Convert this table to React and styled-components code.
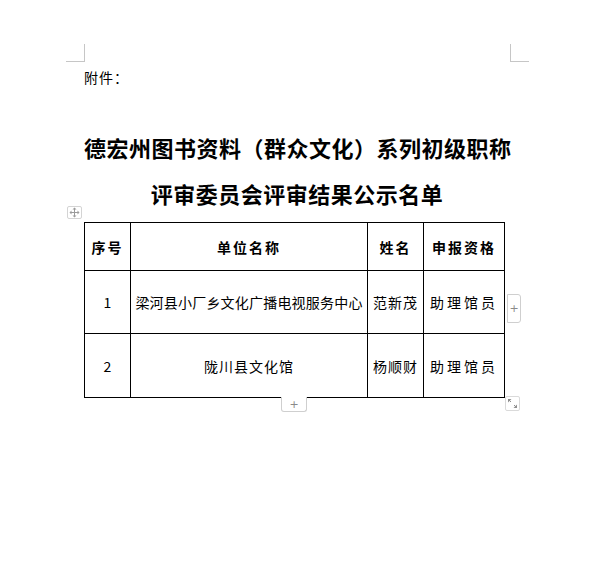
import React from 'react';
import styled, { createGlobalStyle } from 'styled-components';

const Global = createGlobalStyle`
  html, body { margin: 0; padding: 0; background: #fff; }
  body { font-family: "Noto Sans CJK SC", sans-serif; color: #000; }
`;

const Page = styled.div`
  width: 599px;
  height: 578px;
  box-sizing: border-box;
  padding-top: 44px;
  background: #fff;
`;

const Marks = styled.div`
  display: flex;
  justify-content: space-between;
  margin: 0 70px 0 66px;
`;

const Mark = styled.div`
  width: 19px;
  height: 18px;
  box-sizing: border-box;
  border-bottom: 1px solid #c6c6c6;
  ${(p) => (p.$side === 'left' ? 'border-right: 1px solid #c6c6c6;' : 'border-left: 1px solid #c6c6c6;')}
`;

const Content = styled.div`
  margin-left: 84px;
  width: 426px;
`;

const Attachment = styled.div`
  margin-top: 5px;
  font-size: 14px;
  line-height: 20px;
  letter-spacing: 1px;
`;

const Title = styled.h1`
  margin: 37px 0 0;
  font-size: 22px;
  font-weight: 700;
  line-height: 46px;
  text-align: center;
  white-space: nowrap;
  letter-spacing: 0.5px;
`;

const TableWrap = styled.div`
  position: relative;
  margin-top: 6px;
  width: 420px;
`;

const Table = styled.table`
  border-collapse: collapse;
  table-layout: fixed;
  width: 420px;
`;

const Th = styled.td`
  border: 1px solid #000;
  height: 47px;
  padding: 0;
  text-align: center;
  vertical-align: middle;
  font-size: 14px;
  font-weight: 700;
  letter-spacing: 2px;
`;

const Td = styled.td`
  border: 1px solid #000;
  height: ${(p) => p.$h}px;
  padding: 0 ${(p) => (p.$tight ? 0 : 2)}px;
  text-align: center;
  vertical-align: middle;
  font-size: 14px;
  letter-spacing: ${(p) => p.$ls || 0}px;
  white-space: nowrap;
  overflow: visible;
`;

const MoveHandle = styled.div`
  position: absolute;
  left: -17px;
  top: -16px;
  width: 15px;
  height: 13px;
  box-sizing: border-box;
  border: 1px solid #d4d4d4;
  border-radius: 2px;
  display: flex;
  align-items: center;
  justify-content: center;
  background: #fff;
`;

const SideAdd = styled.div`
  position: absolute;
  left: 423px;
  top: 72px;
  width: 14px;
  height: 29px;
  box-sizing: border-box;
  border: 1px solid #cfcfcf;
  border-radius: 0 3px 3px 0;
  display: flex;
  align-items: center;
  justify-content: center;
  color: #8a8a8a;
  font-family: "DejaVu Sans", sans-serif;
  font-size: 11px;
  background: #fff;
`;

const BottomAdd = styled.div`
  position: absolute;
  left: 197px;
  top: 175px;
  width: 26px;
  height: 15px;
  box-sizing: border-box;
  border: 1px solid #cfcfcf;
  border-top: none;
  border-radius: 0 0 3px 3px;
  display: flex;
  align-items: center;
  justify-content: center;
  color: #8a8a8a;
  font-family: "DejaVu Sans", sans-serif;
  font-size: 11px;
  background: #fff;
`;

const Resize = styled.div`
  position: absolute;
  left: 421px;
  top: 174px;
  width: 15px;
  height: 15px;
  box-sizing: border-box;
  border: 1px solid #dadada;
  border-radius: 2px;
  display: flex;
  align-items: center;
  justify-content: center;
  background: #fff;
`;

const MoveIcon = () => (
  <svg width="11" height="11" viewBox="0 0 11 11">
    <g fill="#9a9a9a">
      <path d="M5.5 0.5 L7.5 2.5 L3.5 2.5 Z" />
      <path d="M5.5 10.5 L7.5 8.5 L3.5 8.5 Z" />
      <path d="M0.5 5.5 L2.5 3.5 L2.5 7.5 Z" />
      <path d="M10.5 5.5 L8.5 3.5 L8.5 7.5 Z" />
      <rect x="5" y="2" width="1" height="7" />
      <rect x="2" y="5" width="7" height="1" />
    </g>
  </svg>
);

const ResizeIcon = () => (
  <svg width="11" height="11" viewBox="0 0 11 11">
    <g fill="#8f8f8f">
      <path d="M1 1 L4.5 1 L1 4.5 Z" />
      <path d="M10 10 L6.5 10 L10 6.5 Z" />
      <path d="M2 2 L4 4" stroke="#8f8f8f" strokeWidth="1" />
      <path d="M7 7 L9 9" stroke="#8f8f8f" strokeWidth="1" />
    </g>
  </svg>
);

const rows = [
  { no: '1', unit: '梁河县小厂乡文化广播电视服务中心', name: '范新茂', level: '助理馆员', h: 62, unitLs: 0.2 },
  { no: '2', unit: '陇川县文化馆', name: '杨顺财', level: '助理馆员', h: 63, unitLs: 1 },
];

export default function App() {
  return (
    <Page>
      <Global />
      <Marks>
        <Mark $side="left" />
        <Mark $side="right" />
      </Marks>
      <Content>
        <Attachment>附件：</Attachment>
        <Title>
          德宏州图书资料（群众文化）系列初级职称
          <br />
          评审委员会评审结果公示名单
        </Title>
        <TableWrap>
          <MoveHandle>
            <MoveIcon />
          </MoveHandle>
          <Table>
            <colgroup>
              <col style={{ width: 46 }} />
              <col style={{ width: 237 }} />
              <col style={{ width: 56 }} />
              <col style={{ width: 81 }} />
            </colgroup>
            <tbody>
              <tr>
                <Th>序号</Th>
                <Th>单位名称</Th>
                <Th>姓名</Th>
                <Th>申报资格</Th>
              </tr>
              {rows.map((r) => (
                <tr key={r.no}>
                  <Td $h={r.h}>{r.no}</Td>
                  <Td $h={r.h} $ls={r.unitLs} $tight>{r.unit}</Td>
                  <Td $h={r.h} $ls={1} $tight>{r.name}</Td>
                  <Td $h={r.h} $ls={3}>{r.level}</Td>
                </tr>
              ))}
            </tbody>
          </Table>
          <SideAdd>+</SideAdd>
          <BottomAdd>+</BottomAdd>
          <Resize>
            <ResizeIcon />
          </Resize>
        </TableWrap>
      </Content>
    </Page>
  );
}
